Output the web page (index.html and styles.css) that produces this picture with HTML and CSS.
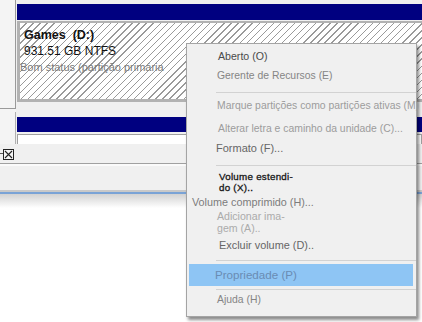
FILE: index.html
```html
<!DOCTYPE html>
<html lang="pt">
<head>
  <meta charset="UTF-8" />
  <title>Gerenciamento de disco</title>
  <link rel="stylesheet" href="styles.css">
</head>
<body>

  <div class="window">
    <div class="side">
      <div class="side-top"></div>
      <div class="side-bottom"></div>
    </div>
    <div class="disks">
      <div class="disk">
        <div class="disk-bar"></div>
        <div class="part hatch">
          <div class="part-name">Games&nbsp; (D:)</div>
          <div class="part-size">931.51 GB NTFS</div>
          <div class="part-status">Bom status (partição primária</div>
        </div>
      </div>
      <div class="disk disk-second">
        <div class="disk-bar"></div>
        <div class="part plain">
          <div class="part-name">Works (F:)</div>
        </div>
      </div>
    </div>
  </div>

  <div class="statusbar">
    <span class="dash"></span>
    <svg class="check" width="11" height="11" viewBox="0 0 11 11">
      <rect x="0.5" y="0.5" width="10" height="10" fill="#f4f4f4" stroke="#222" />
      <path d="M2 2 L9 9 M9 2 L2 9" stroke="#222" stroke-width="1.1" />
    </svg>
  </div>
  <div class="pane"></div>
  <div class="pane-shadow"></div>

  <div class="menu">
    <div class="item dark">Aberto (O)</div>
    <div class="item grey">Gerente de Recursos (E)</div>
    <div class="sep sep-a"></div>
    <div class="item light">Marque partições como partições ativas (M)</div>
    <div class="item light tall">Alterar letra e caminho da unidade (C)...</div>
    <div class="item mid short">Formato (F)...</div>
    <div class="sep sep-b"></div>
    <div class="item two black">Volume estendi-<br>do (X)..</div>
    <div class="item grey outdent">Volume comprimido (H)...</div>
    <div class="item two faint">Adicionar ima-<br>gem (A)..</div>
    <div class="item mid excl">Excluir volume (D)..</div>
    <div class="sep sep-c"></div>
    <div class="item selected">Propriedade (P)</div>
    <div class="sep sep-d"></div>
    <div class="item grey">Ajuda (H)</div>
  </div>

</body>
</html>
```

FILE: styles.css
```css
* { box-sizing: border-box; margin: 0; padding: 0; }
body {
  background: #fff;
  font-family: 'Liberation Sans', Arial, sans-serif;
  width: 422px;
  height: 322px;
  overflow: hidden;
  position: relative;
}

/* disk window in the back */
.window {
  display: grid;
  grid-template-columns: 16px 1fr;
  height: 144px;
  overflow: hidden;
  background: #f0f0f0;
}

.side {
  display: flex;
  flex-direction: column;
  background: #f4f4f4;
}

.side-top {
  height: 109px;
  border-right: 1px solid #9a9a9a;
  border-bottom: 1px solid #9a9a9a;
}

.side-bottom {
  flex: 1;
  margin-top: 3px;
  border-right: 1px solid #b0b0b0;
}

.disks {
  padding: 4px 0 0 1px;
}

.disk-bar {
  height: 16px;
  background: #000080;
}

.part {
  margin-top: 1px;
  height: 81px;
  border: 3px solid #b2b2b2;
  border-top-width: 2px;
  border-right: none;
  padding: 4px 4px;
  font-size: 12px;
  line-height: 16px;
  color: #111;
}

.hatch {
  background: repeating-linear-gradient(135deg, #fff 0 4px, #9a9a9a 4px 5px);
}

.part-name {
  font-weight: bold;
  font-size: 12.5px;
}

.part-status {
  margin-left: -4px;
  font-size: 11px;
  color: #7a7a7a;
}

.disk-second {
  margin-top: 15px;
}

.disk-second .disk-bar {
  height: 15px;
}

.plain {
  margin-top: 2px;
  background: #fff;
  border: 1px solid #a0a0a0;
  padding-top: 6px;
}

/* status strip and pane under it */
.statusbar {
  height: 20px;
  background: #f0f0f0;
  border-bottom: 1px solid #a0a0a0;
  display: flex;
  align-items: center;
}

.dash {
  width: 3px;
  height: 1px;
  background: #555;
}

.check {
  display: block;
  margin-top: 2px;
}

.pane {
  height: 28px;
  background: #f0f0f0;
  border-top: 2px solid #fafafa;
  border-bottom: 2px solid #c9c9c9;
  box-shadow: 0 2px 0 #7aa3d6;
}

.pane-shadow {
  margin-top: 2px;
  height: 14px;
  background: linear-gradient(#d2d2d2, #fff);
}

/* context menu */
.menu {
  position: absolute;
  left: 186px;
  top: 43px;
  width: 231px;
  height: 274px;
  background: #f0f0f0;
  border: 1px solid #a4a4a4;
  box-shadow: 2px 3px 3px rgba(0,0,0,0.45);
  padding-top: 2px;
  font-size: 10.4px;
}

.item {
  height: 20px;
  line-height: 20px;
  padding-left: 30px;
  white-space: nowrap;
}

.dark { color: #4a4a4a; font-size: 10.6px; padding-left: 31px; }
.grey { color: #858585; }
.light { color: #9c9c9c; }
.mid { color: #666; }
.black { color: #161616; }
.faint { color: #ababab; }

.tall { height: 25px; line-height: 25px; padding-left: 31px; }
.short { height: 14px; line-height: 14px; font-size: 11px; padding-left: 29px; }

.two {
  height: 21px;
  line-height: 11px;
  font-size: 9.8px;
  letter-spacing: 0.25px;
  -webkit-text-stroke: 0.3px #161616;
  padding-left: 32px;
}

.faint.two {
  height: 24px;
  line-height: 12px;
  font-size: 10.6px;
  letter-spacing: 0;
  -webkit-text-stroke: 0;
  padding-left: 30px;
}

.outdent {
  height: 18px;
  line-height: 16px;
  padding: 2px 0 0 5px;
  font-size: 10.8px;
  color: #7c7c7c;
}

.excl {
  height: 22px;
  line-height: 22px;
  font-size: 10.9px;
  padding-left: 32px;
}

.sep {
  height: 1px;
  margin-left: 29px;
  background: #d2d2d2;
}

.sep-a { margin-top: 6px; margin-bottom: 3px; }
.sep-b { margin-top: 10px; margin-bottom: 5px; }
.sep-c { margin-top: 4px; margin-bottom: 3px; }
.sep-d { margin-top: 3px; }

.selected {
  height: 22px;
  line-height: 22px;
  margin: 0 3px 0 2px;
  padding-left: 26px;
  background: #8ec5f4;
  color: #6a8cb3;
  font-size: 11.6px;
}
```
